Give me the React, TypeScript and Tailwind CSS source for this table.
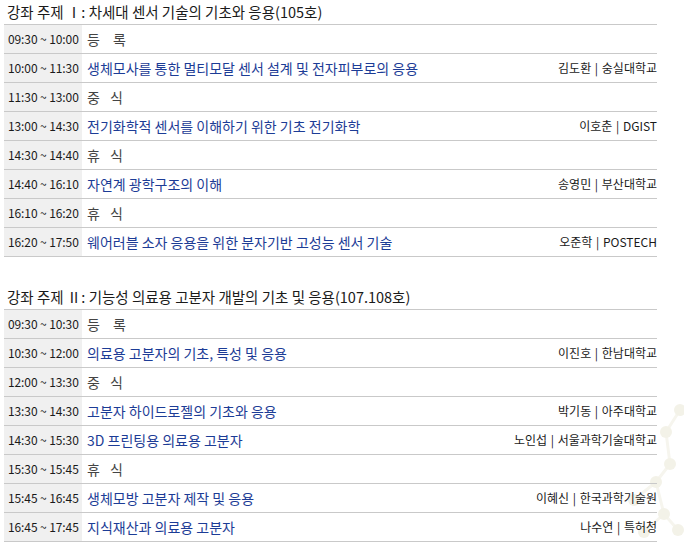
import React from "react";

type Row = { time: string; title: string; speaker?: string; pause?: [string, string, string] };

const session1: Row[] = [
  { time: "09:30 ~ 10:00", title: "", pause: ["등", "록", "gap-[13px]"] },
  { time: "10:00 ~ 11:30", title: "생체모사를 통한 멀티모달 센서 설계 및 전자피부로의 응용", speaker: "김도환 | 숭실대학교" },
  { time: "11:30 ~ 13:00", title: "", pause: ["중", "식", "gap-[10px]"] },
  { time: "13:00 ~ 14:30", title: "전기화학적 센서를 이해하기 위한 기초 전기화학", speaker: "이호춘 | DGIST" },
  { time: "14:30 ~ 14:40", title: "", pause: ["휴", "식", "gap-[10px]"] },
  { time: "14:40 ~ 16:10", title: "자연계 광학구조의 이해", speaker: "송영민 | 부산대학교" },
  { time: "16:10 ~ 16:20", title: "", pause: ["휴", "식", "gap-[10px]"] },
  { time: "16:20 ~ 17:50", title: "웨어러블 소자 응용을 위한 분자기반 고성능 센서 기술", speaker: "오준학 | POSTECH" },
];

const session2: Row[] = [
  { time: "09:30 ~ 10:30", title: "", pause: ["등", "록", "gap-[13px]"] },
  { time: "10:30 ~ 12:00", title: "의료용 고분자의 기초, 특성 및 응용", speaker: "이진호 | 한남대학교" },
  { time: "12:00 ~ 13:30", title: "", pause: ["중", "식", "gap-[10px]"] },
  { time: "13:30 ~ 14:30", title: "고분자 하이드로젤의 기초와 응용", speaker: "박기동 | 아주대학교" },
  { time: "14:30 ~ 15:30", title: "3D 프린팅용 의료용 고분자", speaker: "노인섭 | 서울과학기술대학교" },
  { time: "15:30 ~ 15:45", title: "", pause: ["휴", "식", "gap-[10px]"] },
  { time: "15:45 ~ 16:45", title: "생체모방 고분자 제작 및 응용", speaker: "이혜신 | 한국과학기술원" },
  { time: "16:45 ~ 17:45", title: "지식재산과 의료용 고분자", speaker: "나수연 | 특허청" },
];

function Schedule({ rows }: { rows: Row[] }) {
  return (
    <div className="border-t border-[#c9c9c9]">
      {rows.map((r) => (
        <div key={r.time} className="flex h-[29px] border-b border-[#c9c9c9]">
          <div className="w-[78px] shrink-0 bg-[#f0f0f0] pl-[4px] flex items-center text-[12px] text-[#1a1a1a] whitespace-nowrap tracking-[-0.1px]">
            {r.time}
          </div>
          {r.pause ? (
            <div className={`flex-1 pl-[5px] flex items-center text-[14px] text-[#444] ${r.pause[2]}`}>
              <span>{r.pause[0]}</span>
              <span>{r.pause[1]}</span>
            </div>
          ) : (
            <div className="flex-1 pl-[5px] flex items-center text-[14px] text-[#1c3c96] whitespace-nowrap">
              {r.title}
            </div>
          )}
          {r.speaker && (
            <div className="flex items-center text-[12px] text-[#1a1a1a] whitespace-nowrap [word-spacing:1px]">
              {r.speaker}
            </div>
          )}
        </div>
      ))}
    </div>
  );
}

function Molecule() {
  const nodes = [
    [86, 30], [72, 52], [76, 84], [62, 102], [70, 134], [50, 152], [84, 150], [40, 120],
  ];
  const edges = [
    [0, 1], [1, 2], [2, 3], [3, 4], [4, 5], [4, 6], [3, 7],
  ];
  return (
    <svg className="absolute right-0 bottom-0 pointer-events-none" width="90" height="172" viewBox="0 0 90 172">
      {edges.map(([a, b], i) => (
        <line
          key={i}
          x1={nodes[a][0]}
          y1={nodes[a][1]}
          x2={nodes[b][0]}
          y2={nodes[b][1]}
          stroke="#f6f5ee"
          strokeWidth="3"
        />
      ))}
      {nodes.map(([x, y], i) => (
        <circle key={i} cx={x} cy={y} r="6" fill="#f3f2e8" />
      ))}
    </svg>
  );
}

export default function App() {
  return (
    <div
      className="relative w-[684px] h-[552px] bg-white overflow-hidden"
      style={{ fontFamily: '"Noto Sans CJK KR", "Noto Sans", sans-serif' }}
    >
      <Molecule />
      <div className="relative pl-[4px] w-[657px]">
        <h2 className="h-[24px] flex items-center pl-[3px] text-[14.5px] text-[#1a1a1a] font-normal whitespace-nowrap">
          강좌 주제 Ⅰ: 차세대 센서 기술의 기초와 응용(105호)
        </h2>
        <Schedule rows={session1} />
        <h2 className="mt-[27px] h-[25px] flex items-center pl-[3px] text-[14.5px] text-[#1a1a1a] font-normal whitespace-nowrap">
          강좌 주제 Ⅱ: 기능성 의료용 고분자 개발의 기초 및 응용(107.108호)
        </h2>
        <Schedule rows={session2} />
      </div>
    </div>
  );
}
